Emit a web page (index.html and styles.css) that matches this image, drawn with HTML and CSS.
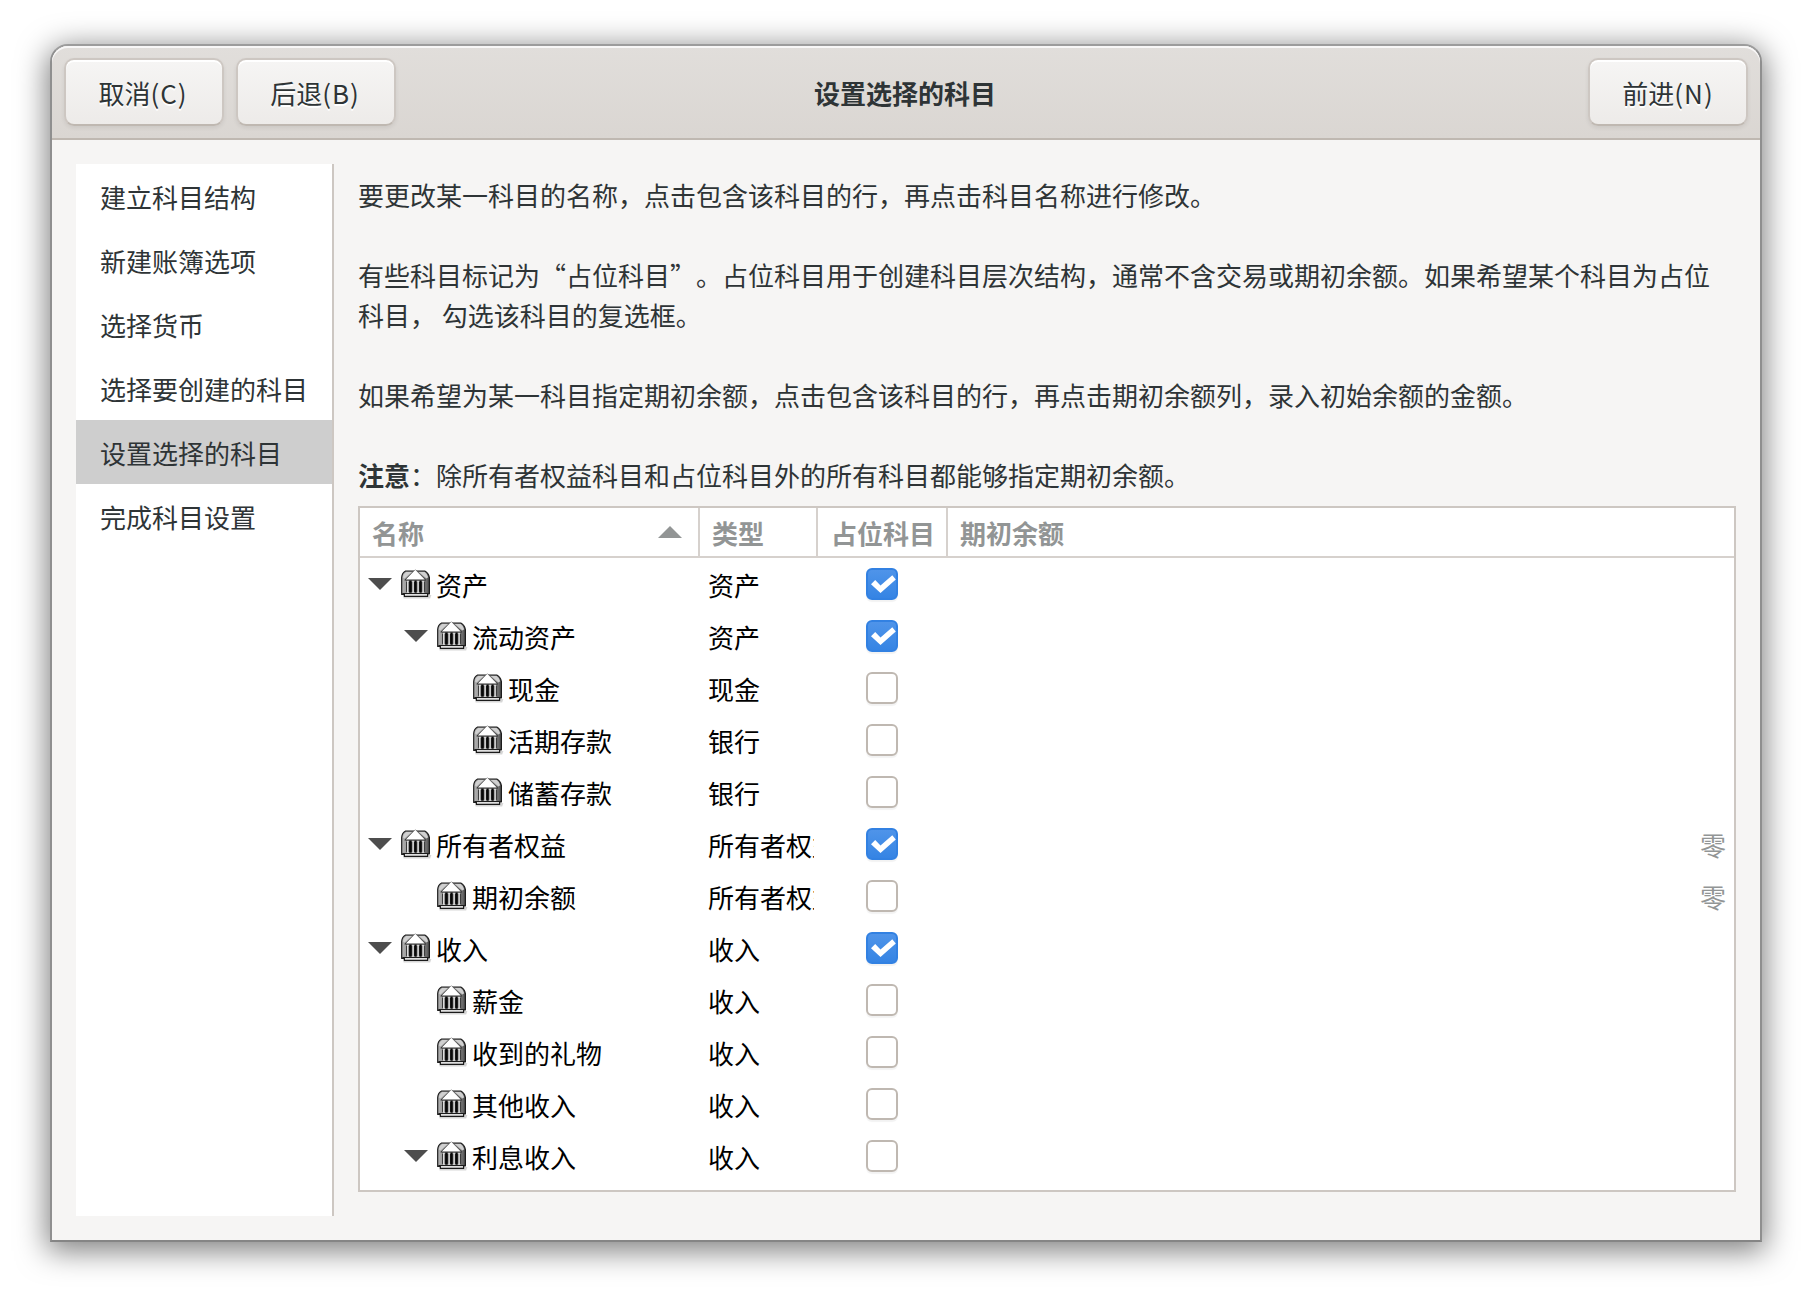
FILE: index.html
```html
<!DOCTYPE html>
<html lang="zh-CN">
<head>
<meta charset="utf-8">
<title>设置选择的科目</title>
<link rel="stylesheet" href="styles.css">
</head>
<body>
<svg class="defs" width="0" height="0">
  <defs>
    <linearGradient id="vault" x1="0" x2="1" y1="0" y2="0">
      <stop offset="0" stop-color="#b4b4b4"/><stop offset=".2" stop-color="#9a9a9a"/>
      <stop offset=".8" stop-color="#8a8a8a"/><stop offset="1" stop-color="#4a4a4a"/>
    </linearGradient>
    <symbol id="bank" viewBox="0 0 32 32">
      <path d="M3 27h28.4l-1.2 3.4H3.6z" fill="#000" opacity=".16"/>
      <path d="M1.7 9.5Q2 4.8 5.6 3h19.2q3.6 1.8 4.6 6.5v16.3h-1.8v2.6H4.4v-2H1.7z" fill="url(#vault)" stroke="#1c1c1c" stroke-width="1.2" stroke-linejoin="round"/>
      <path d="M2.8 9.2Q3.4 5.4 6.2 3.9h5.6L4.6 10.6zM28.2 9.2Q27.2 5.4 24.6 3.9h-5.8l7.6 6.6z" fill="#d0d0d0"/>
      <path d="M6 12h19.2v13.4H6z" fill="#3c3c3c"/>
      <path d="M9.2 13h2.4v11H9.2zM14.3 13h2.2v11h-2.2zM19.4 13h2.2v11h-2.2z" fill="#080808"/>
      <path d="M4.6 11.8 15.3 1.4 26 11.8v.8H4.6z" fill="#333"/>
      <path d="M5.8 11.6 15.3 1.8 24.8 11.6z" fill="#fff"/>
      <path d="M6.4 13.2h2.8M11.7 13.2h2.8M16.7 13.2h2.8M21.7 13.2h2.8M6.4 24.4h2.8M11.7 24.4h2.8M16.7 24.4h2.8M21.7 24.4h2.8" stroke="#d0d0d0" stroke-width="1"/>
      <path d="M7.8 13v11.4M13.1 13v11.4M18.1 13v11.4M23.1 13v11.4" stroke="#e4e4e4" stroke-width="1.5"/>
      <path d="M2.4 25.5h26.4" stroke="#1c1c1c" stroke-width="1"/>
      <path d="M5 26.8h22" stroke="#e4e4e4" stroke-width="1.5"/>
    </symbol>
    <symbol id="tick" viewBox="0 0 32 32">
      <path d="M5 16.3 9.2 12.1 14.5 17.4 26.3 7.2 29.8 11.6 14.5 25z" fill="#fff"/>
    </symbol>
  </defs>
</svg>
<div class="window">
  <header class="titlebar">
    <div class="actions start"><button class="button">取消<span class="key">(C)</span></button><button class="button">后退<span class="key">(B)</span></button></div>
    <h1 class="title">设置选择的科目</h1>
    <div class="actions end"><button class="button">前进<span class="key">(N)</span></button></div>
  </header>
  <div class="body">
    <nav class="steps">
      <div class="step">建立科目结构</div>
      <div class="step">新建账簿选项</div>
      <div class="step">选择货币</div>
      <div class="step">选择要创建的科目</div>
      <div class="step current">设置选择的科目</div>
      <div class="step">完成科目设置</div>
    </nav>
    <main class="page">
      <div class="intro">
        <p>要更改某一科目的名称，点击包含该科目的行，再点击科目名称进行修改。</p>
        <p>有些科目标记为“占位科目”。占位科目用于创建科目层次结构，通常不含交易或期初余额。如果希望某个科目为占位<br>科目， 勾选该科目的复选框。</p>
        <p>如果希望为某一科目指定期初余额，点击包含该科目的行，再点击期初余额列，录入初始余额的金额。</p>
        <p><b>注意</b>：除所有者权益科目和占位科目外的所有科目都能够指定期初余额。</p>
      </div>
      <div class="tree">
        <div class="row head">
          <div class="th sorted">名称<svg class="sort" width="24" height="12"><path d="M0 12 12 0l12 12z" fill="#929595"/></svg></div>
          <div class="th">类型</div><div class="th center">占位科目</div><div class="th">期初余额</div>
        </div>
        <div class="row"><div class="name"><i class="expander"></i><svg class="bank"><use href="#bank"/></svg>资产</div><div class="type">资产</div><div class="flag"><span class="check on"><svg><use href="#tick"/></svg></span></div><div class="balance"></div></div>
        <div class="row"><div class="name d1"><i class="expander"></i><svg class="bank"><use href="#bank"/></svg>流动资产</div><div class="type">资产</div><div class="flag"><span class="check on"><svg><use href="#tick"/></svg></span></div><div class="balance"></div></div>
        <div class="row"><div class="name d2"><i class="expander leaf"></i><svg class="bank"><use href="#bank"/></svg>现金</div><div class="type">现金</div><div class="flag"><span class="check"></span></div><div class="balance"></div></div>
        <div class="row"><div class="name d2"><i class="expander leaf"></i><svg class="bank"><use href="#bank"/></svg>活期存款</div><div class="type">银行</div><div class="flag"><span class="check"></span></div><div class="balance"></div></div>
        <div class="row"><div class="name d2"><i class="expander leaf"></i><svg class="bank"><use href="#bank"/></svg>储蓄存款</div><div class="type">银行</div><div class="flag"><span class="check"></span></div><div class="balance"></div></div>
        <div class="row"><div class="name"><i class="expander"></i><svg class="bank"><use href="#bank"/></svg>所有者权益</div><div class="type">所有者权益</div><div class="flag"><span class="check on"><svg><use href="#tick"/></svg></span></div><div class="balance">零</div></div>
        <div class="row"><div class="name d1"><i class="expander leaf"></i><svg class="bank"><use href="#bank"/></svg>期初余额</div><div class="type">所有者权益</div><div class="flag"><span class="check"></span></div><div class="balance">零</div></div>
        <div class="row"><div class="name"><i class="expander"></i><svg class="bank"><use href="#bank"/></svg>收入</div><div class="type">收入</div><div class="flag"><span class="check on"><svg><use href="#tick"/></svg></span></div><div class="balance"></div></div>
        <div class="row"><div class="name d1"><i class="expander leaf"></i><svg class="bank"><use href="#bank"/></svg>薪金</div><div class="type">收入</div><div class="flag"><span class="check"></span></div><div class="balance"></div></div>
        <div class="row"><div class="name d1"><i class="expander leaf"></i><svg class="bank"><use href="#bank"/></svg>收到的礼物</div><div class="type">收入</div><div class="flag"><span class="check"></span></div><div class="balance"></div></div>
        <div class="row"><div class="name d1"><i class="expander leaf"></i><svg class="bank"><use href="#bank"/></svg>其他收入</div><div class="type">收入</div><div class="flag"><span class="check"></span></div><div class="balance"></div></div>
        <div class="row"><div class="name d1"><i class="expander"></i><svg class="bank"><use href="#bank"/></svg>利息收入</div><div class="type">收入</div><div class="flag"><span class="check"></span></div><div class="balance"></div></div>
      </div>
    </main>
  </div>
</div>
</body>
</html>
```

FILE: styles.css
```css
* { box-sizing: border-box; }
body {
  margin: 0;
  padding: 44px 50px 56px;
  height: 1298px;
  background: #fff;
  font: 26px/40px "Noto Sans CJK SC", sans-serif;
  text-spacing-trim: space-all;
  color: #2e3436;
  overflow: hidden;
}
.defs { position: absolute; }
.window {
  height: 1198px;
  border: 2px solid #8f8f8f;
  border-top-color: #9c9c9c;
  border-bottom-color: #858585;
  border-radius: 18px 18px 0 0;
  background: #f6f5f4;
  box-shadow: 0 6px 30px 3px rgba(0,0,0,.5);
  display: flex;
  flex-direction: column;
}
.titlebar {
  height: 94px;
  padding: 12px;
  border-bottom: 2px solid #bfb8b1;
  border-radius: 16px 16px 0 0;
  background: linear-gradient(#e1dedb, #dad6d2);
  box-shadow: inset 0 2px #f8f7f7;
  display: grid;
  grid-template-columns: 1fr auto 1fr;
  align-items: start;
}
.actions { display: flex; gap: 12px; }
.actions.end { justify-content: flex-end; }
.button {
  width: 160px;
  height: 68px;
  padding: 2px 0 0;
  border: 2px solid #cdc7c2;
  border-bottom-color: #bfb8b1;
  border-radius: 10px;
  background: linear-gradient(#f6f5f4, #edebe9);
  box-shadow: inset 0 2px #fff, 0 2px 4px rgba(0,0,0,.07);
  font: inherit;
  color: inherit;
  text-shadow: 0 2px #fff;
}
.start .button { padding-right: 2px; }
.key { letter-spacing: 1px; }
.title { margin: 0; padding: 15px 2px 0 0; font-size: 26px; line-height: 40px; font-weight: 700; }
.body { flex: 1; padding: 24px; display: flex; gap: 24px; }
.steps { width: 258px; background: #fff; border-right: 2px solid #cdc7c2; }
.step { height: 64px; padding: 13px 24px 0; line-height: 40px; white-space: nowrap; }
.current { background: #cecece; }
.page { flex: 1; min-width: 0; padding: 11px 0 24px; display: flex; flex-direction: column; }
.intro { height: 331px; white-space: nowrap; }
.intro p { margin: 0 0 40px; }
.tree { flex: 1; border: 2px solid #cdc7c2; background: #fff; color: #000; overflow: hidden; }
.row { height: 52px; display: grid; grid-template-columns: 340px 118px 130px 1fr; align-items: center; }
.head { height: 50px; border-bottom: 2px solid #d6d1cd; align-items: stretch; font-weight: 700; color: #929595; }
.th { height: 48px; padding: 5px 12px 0; border-right: 2px solid #d6d1cd; display: flex; white-space: nowrap; }
.th:last-child { border-right: 0; }
.center { padding: 5px 0 0 13px; }
.sorted { justify-content: space-between; padding-right: 16px; }
.sort { margin-top: 13px; }
.name { display: flex; align-items: center; padding: 2px 0 0 8px; white-space: nowrap; }
.d1 { padding-left: 44px; }
.d2 { padding-left: 80px; }
.expander { width: 24px; height: 12px; margin: -2px 8px 0 0; background: #4d4d4d; clip-path: polygon(0 0, 100% 0, 50% 100%); }
.leaf { visibility: hidden; }
.bank { width: 32px; height: 32px; margin: -2px 4px 0 0; }
.type { margin: 2px 4px 0 8px; overflow: hidden; white-space: nowrap; }
.flag { display: flex; justify-content: center; padding-right: 2px; }
.check { width: 32px; height: 32px; border: 2px solid #bfb8b1; border-radius: 6px; background: #fff; box-shadow: 0 2px 1px rgba(0,0,0,.05); }
.on { border-color: #3281e2; background: linear-gradient(#4f94e9, #3584e4); }
.on svg { display: block; width: 32px; height: 32px; margin: -2px; }
.balance { padding: 2px 8px 0; text-align: right; color: #929595; }
```
